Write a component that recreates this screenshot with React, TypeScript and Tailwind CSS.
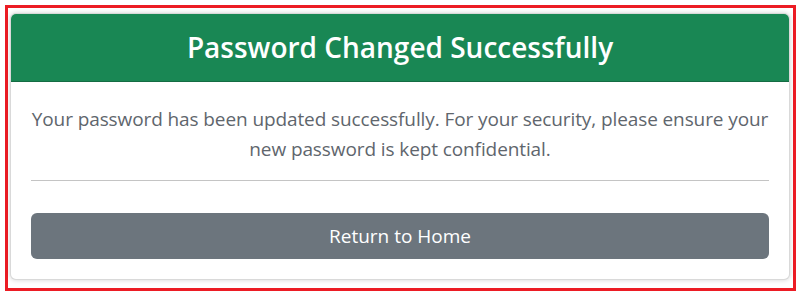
export default function App() {
  return (
    <div className="bg-white p-[5px] pr-[6px] pb-0" style={{ fontFamily: '"Open Sans", "Noto Sans", sans-serif' }}>
      <div className="border-[3px] border-[#ec1c24] pl-[2px] pr-[3px] pt-[5px] pb-[8px]">
        <div className="rounded-[6px] border border-black/15 bg-white overflow-hidden shadow-[0_0_5px_rgba(0,0,0,0.18)]">
          <div className="flex h-[68px] items-center justify-center border-b border-[#146c43] bg-[#198754]">
            <h2 className="text-[28px] font-semibold leading-[1.2] tracking-[0px] text-white">Password Changed Successfully</h2>
          </div>
          <div className="px-5 pt-[22px] pb-5">
            <p className="text-center text-[19px] leading-[30px] tracking-[-0.1px] text-[#5f666d]">
              Your password has been updated successfully. For your security, please ensure your new password is kept confidential.
            </p>
            <hr className="mt-[16px] mb-[32px] border-t border-[#c4c4c4]" />
            <button className="h-[46px] w-full rounded-[6px] bg-[#6c757d] text-[19px] text-white">
              Return to Home
            </button>
          </div>
        </div>
      </div>
    </div>
  )
}
